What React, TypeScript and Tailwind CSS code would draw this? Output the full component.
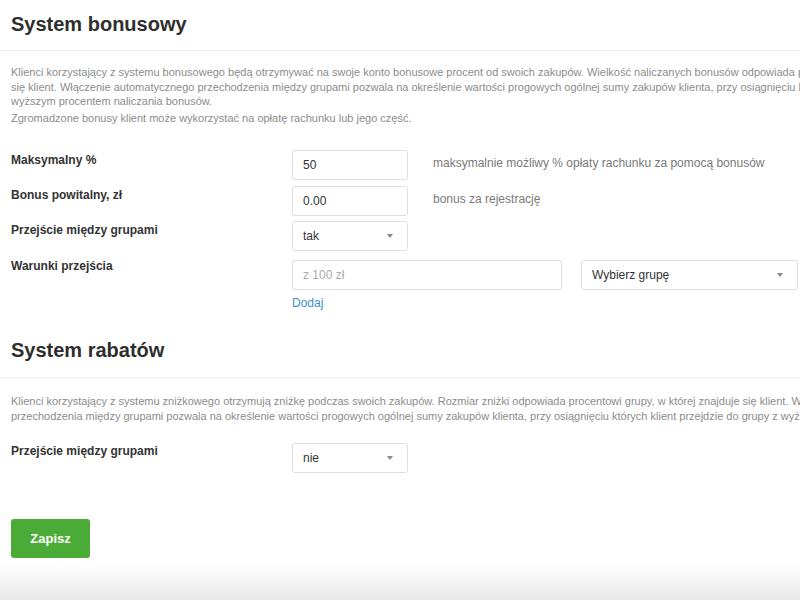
const bonusDesc = [
  "Klienci korzystający z systemu bonusowego będą otrzymywać na swoje konto bonusowe procent od swoich zakupów. Wielkość naliczanych bonusów odpowiada procentowi grupy, w której znajduje",
  "się klient. Włączenie automatycznego przechodzenia między grupami pozwala na określenie wartości progowych ogólnej sumy zakupów klienta, przy osiągnięciu których klient przejdzie do grupy z",
  "wyższym procentem naliczania bonusów.",
];

const rabatDesc = [
  "Klienci korzystający z systemu zniżkowego otrzymują zniżkę podczas swoich zakupów. Rozmiar zniżki odpowiada procentowi grupy, w której znajduje się klient. Włączenie automatycznego",
  "przechodzenia między grupami pozwala na określenie wartości progowych ogólnej sumy zakupów klienta, przy osiągnięciu których klient przejdzie do grupy z wyższym procentem zniżki.",
];

function Caret() {
  return (
    <span className="w-0 h-0 border-l-[3.5px] border-r-[3.5px] border-t-[4px] border-l-transparent border-r-transparent border-t-[#8a8a8a]" />
  );
}

function Field({ value, className = "" }: { value: string; className?: string }) {
  return (
    <div
      className={`h-[30px] border border-[#dedede] rounded-[3px] px-[10px] flex items-center text-[12px] text-[#333] shrink-0 ${className}`}
    >
      {value}
    </div>
  );
}

function Select({ value, className = "" }: { value: string; className?: string }) {
  return (
    <div
      className={`h-[30px] border border-[#dedede] rounded-[3px] pl-[10px] pr-[14px] flex items-center justify-between text-[12px] text-[#333] shrink-0 ${className}`}
    >
      <span>{value}</span>
      <Caret />
    </div>
  );
}

function Label({ children, className = "" }: { children: string; className?: string }) {
  return (
    <div className={`w-[281px] shrink-0 text-[12px] leading-[16px] font-bold text-[#333] ${className}`}>
      {children}
    </div>
  );
}

export default function App() {
  return (
    <div className="w-[800px] h-[600px] overflow-hidden bg-white flex flex-col font-['Liberation_Sans',Arial,sans-serif]">
      {/* System bonusowy */}
      <div className="h-[51px] shrink-0 border-b border-[#ececec] px-[11px] pt-[12px]">
        <h2 className="text-[20px] leading-[24px] font-bold text-[#2e2e2e]">System bonusowy</h2>
      </div>
      <div className="px-[11px] pt-[14px] text-[11px] text-[#8c8c8c] whitespace-nowrap">
        <p className="leading-[14.5px]">
          {bonusDesc.map((line, i) => (
            <span key={i} className="block">
              {line}
            </span>
          ))}
        </p>
        <p className="leading-[14.5px] mt-[2px]">
          Zgromadzone bonusy klient może wykorzystać na opłatę rachunku lub jego część.
        </p>
      </div>

      <div className="px-[11px] mt-[25px]">
        <div className="flex items-start">
          <Label className="pt-[2px]">Maksymalny %</Label>
          <Field value="50" className="w-[116px]" />
          <span className="ml-[25px] pt-[5px] text-[12px] leading-[16px] text-[#7a7a7a]">
            maksymalnie możliwy % opłaty rachunku za pomocą bonusów
          </span>
        </div>
        <div className="flex items-start mt-[6px]">
          <Label className="pt-[1px]">Bonus powitalny, zł</Label>
          <Field value="0.00" className="w-[116px]" />
          <span className="ml-[25px] pt-[5px] text-[12px] leading-[16px] text-[#7a7a7a]">
            bonus za rejestrację
          </span>
        </div>
        <div className="flex items-start mt-[5px]">
          <Label className="pt-[1px]">Przejście między grupami</Label>
          <Select value="tak" className="w-[116px]" />
        </div>
        <div className="flex items-start mt-[9px]">
          <Label className="-mt-[2px]">Warunki przejścia</Label>
          <Field value="z 100 zł" className="w-[270px] text-[#aaaaaa]" />
          <Select value="Wybierz grupę" className="w-[217px] ml-[19px]" />
        </div>
        <div className="ml-[281px] mt-[5px] text-[12px] leading-[16px] text-[#3d8fc6]">Dodaj</div>
      </div>

      {/* System rabatów */}
      <div className="h-[51px] shrink-0 border-b border-[#ececec] px-[11px] pt-[11px] mt-[16px]">
        <h2 className="text-[20px] leading-[24px] font-bold text-[#2e2e2e]">System rabatów</h2>
      </div>
      <div className="px-[11px] pt-[16px] text-[11px] leading-[14.5px] text-[#8c8c8c] whitespace-nowrap">
        {rabatDesc.map((line, i) => (
          <span key={i} className="block">
            {line}
          </span>
        ))}
      </div>
      <div className="px-[11px] mt-[20px]">
        <div className="flex items-start">
          <Label>Przejście między grupami</Label>
          <Select value="nie" className="w-[116px]" />
        </div>
      </div>

      <div className="px-[11px] mt-[46px]">
        <button className="w-[79px] h-[39px] rounded-[3px] bg-[#4bab37] text-white text-[13px] font-bold">
          Zapisz
        </button>
      </div>

      <div className="mt-auto h-[36px] shrink-0 bg-gradient-to-b from-white to-[#e8e8e8]" />
    </div>
  );
}
